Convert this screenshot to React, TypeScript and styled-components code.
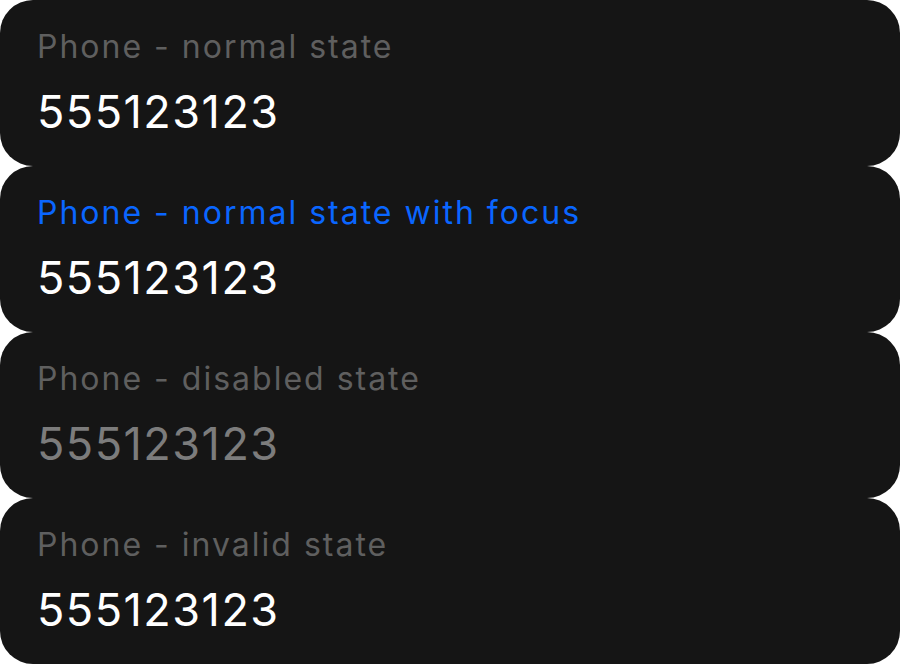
import React from "react";
import styled, { createGlobalStyle } from "styled-components";

const GlobalStyle = createGlobalStyle`
  html, body {
    margin: 0;
    padding: 0;
    background: #ffffff;
  }
`;

type FieldState = "normal" | "focus" | "disabled" | "invalid";

const fields: { label: string; value: string; state: FieldState }[] = [
  { label: "Phone - normal state", value: "555123123", state: "normal" },
  { label: "Phone - normal state with focus", value: "555123123", state: "focus" },
  { label: "Phone - disabled state", value: "555123123", state: "disabled" },
  { label: "Phone - invalid state", value: "555123123", state: "invalid" },
];

const App = () => {
  return (
    <>
      <GlobalStyle />
      <List>
        {fields.map((f) => (
          <Card key={f.label}>
            <Label $state={f.state}>{f.label}</Label>
            <Value $state={f.state}>{f.value}</Value>
          </Card>
        ))}
      </List>
    </>
  );
};

export default App;

const List = styled.div`
  display: flex;
  flex-direction: column;
  width: 900px;
  height: 664px;
`;

const Card = styled.div`
  height: 166px;
  box-sizing: border-box;
  background: #151515;
  border-radius: 33px;
  padding: 28px 37px 0;
  display: flex;
  flex-direction: column;
  font-family: Inter, "Open Sans", sans-serif;
`;

const Label = styled.div<{ $state: FieldState }>`
  font-size: 32px;
  line-height: 38px;
  letter-spacing: 2px;
  white-space: nowrap;
  color: ${(p) => (p.$state === "focus" ? "#0a66ff" : "#5f5f5f")};
`;

const Value = styled.div<{ $state: FieldState }>`
  margin-top: 19px;
  font-size: 45px;
  line-height: 54px;
  letter-spacing: 1.5px;
  white-space: nowrap;
  color: ${(p) => (p.$state === "disabled" ? "#7c7c7c" : "#ffffff")};
`;
